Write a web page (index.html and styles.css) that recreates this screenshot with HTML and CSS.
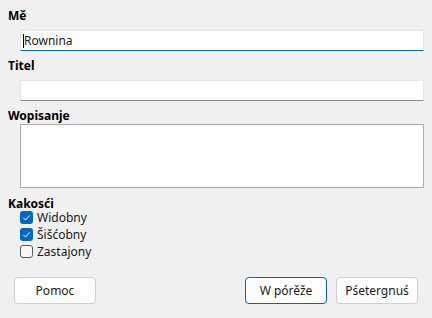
FILE: index.html
```html
<!DOCTYPE html>
<html lang="hsb">
<head>
<meta charset="utf-8">
<link rel="stylesheet" href="styles.css">
</head>
<body>
<div class="dialog">
  <div class="label label-first">Mě</div>
  <div class="field focused"><span class="caret"></span>Rownina</div>
  <div class="label label-titel">Titel</div>
  <div class="field"></div>
  <div class="label label-desc">Wopisanje</div>
  <div class="area"></div>
  <div class="label label-props">Kakosći</div>
  <div class="checks">
    <div class="check"><span class="box on"><svg viewBox="0 0 13 13" width="13" height="13"><path d="M3.3 6.8 L5.5 9 L9.8 4.4" fill="none" stroke="#fff" stroke-width="1"/></svg></span>Widobny</div>
    <div class="check"><span class="box on"><svg viewBox="0 0 13 13" width="13" height="13"><path d="M3.3 6.8 L5.5 9 L9.8 4.4" fill="none" stroke="#fff" stroke-width="1"/></svg></span>Šišćobny</div>
    <div class="check"><span class="box"></span>Zastajony</div>
  </div>
  <div class="buttons">
    <button class="btn">Pomoc</button>
    <div class="spacer"></div>
    <button class="btn default">W pórěže</button>
    <button class="btn">Pśetergnuś</button>
  </div>
</div>
</body>
</html>
```
FILE: styles.css
```css
html, body {
  margin: 0;
  padding: 0;
  background: #f0f0f0;
}
body {
  font-family: "Noto Sans", "Open Sans", sans-serif;
  font-size: 12px;
  color: #1a1a1a;
  width: 432px;
  height: 318px;
  overflow: hidden;
}
.dialog {
  display: flex;
  flex-direction: column;
  padding: 8px 8px 0 8px;
}
.label {
  font-weight: bold;
  line-height: 16px;
  height: 16px;
  color: #000;
}
.label-titel { margin-top: 7px; }
.label-desc { margin-top: 7px; }
.label-props { margin-top: 8px; height: 13px; }
.field {
  box-sizing: border-box;
  margin: 6px 0 0 12px;
  width: 404px;
  height: 21px;
  background: #fff;
  border: 1px solid #e6e6e6;
  border-bottom: 1px solid #868686;
  padding-left: 2px;
  line-height: 19px;
  display: flex;
  align-items: center;
  color: #1a1a1a;
}
.field.focused {
  border-bottom-color: #0067c0;
}
.caret {
  width: 1px;
  height: 14px;
  background: #000;
}
.area {
  box-sizing: border-box;
  margin: 0 0 0 12px;
  width: 404px;
  height: 64px;
  background: #fff;
  border: 1px solid #adadad;
}
.checks {
  display: flex;
  flex-direction: column;
  margin-left: 12px;
}
.check {
  display: flex;
  align-items: center;
  height: 17px;
  line-height: 17px;
  gap: 4px;
}
.box {
  box-sizing: border-box;
  width: 13px;
  height: 13px;
  border-radius: 3px;
  border: 1px solid #5c5c5c;
  background: #f7f7f7;
  display: flex;
}
.box.on {
  border: none;
  background: #0067c0;
}
.buttons {
  display: flex;
  gap: 9px;
  margin: 17px 6px 0 6px;
}
.spacer { flex: 1; }
.btn {
  box-sizing: border-box;
  width: 82px;
  height: 27px;
  background: #fdfdfd;
  border: 1px solid #d0d0d0;
  border-radius: 4px;
  font-family: inherit;
  font-size: 12px;
  color: #1a1a1a;
  padding: 0;
}
.btn.default {
  border-color: #0067c0;
}
```
